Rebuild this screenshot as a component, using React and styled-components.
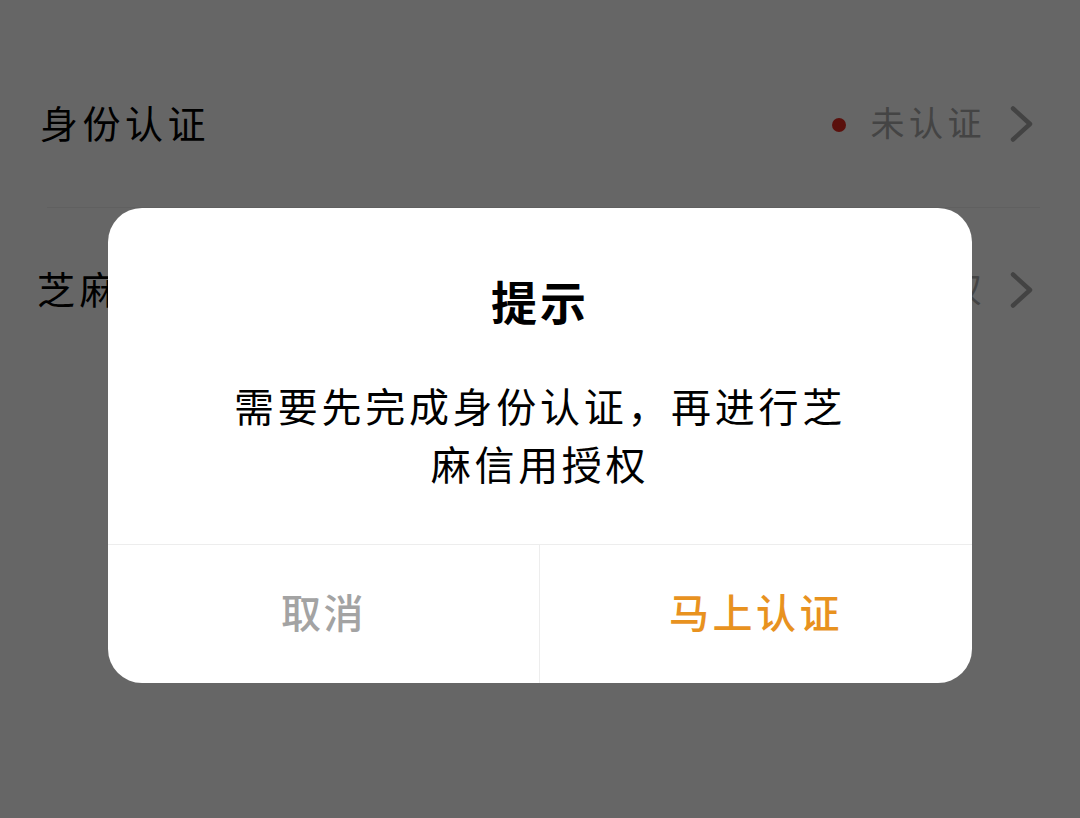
import React from "react";
import styled, { createGlobalStyle } from "styled-components";

const GlobalStyle = createGlobalStyle`
  html, body {
    margin: 0;
    padding: 0;
    background: #fff;
  }
  body {
    font-family: "Noto Sans CJK SC", "Noto Sans", sans-serif;
  }
`;

const Page = styled.div`
  position: relative;
  width: 1080px;
  height: 818px;
  overflow: hidden;
  background: #fff;
  padding-top: 41px;
  box-sizing: border-box;
`;

const Row = styled.div`
  display: flex;
  align-items: center;
  height: 166px;
  box-sizing: border-box;
  margin: 0 40px 0 ${(p) => p.$left || 40}px;
  padding-right: 6px;
`;

const Divider = styled.div`
  height: 1px;
  margin: 0 40px -1px 47px;
  background: #f0f0f0;
`;

const RowLabel = styled.span`
  flex: 1;
  font-size: 38px;
  letter-spacing: 4.5px;
  color: #000;
  line-height: 1;
  padding-bottom: 4px;
`;

const Dot = styled.i`
  width: 14px;
  height: 14px;
  border-radius: 50%;
  background: #e02a20;
  margin: 2px 25px 0 0;
`;

const RowValue = styled.span`
  font-size: 34px;
  letter-spacing: 4.5px;
  color: #aaa;
  line-height: 1;
  margin-right: 24px;
  padding-bottom: 4px;
`;

const Arrow = styled.svg`
  width: 24px;
  height: 36px;
  display: block;
`;

const Overlay = styled.div`
  position: absolute;
  inset: 0;
  background: rgba(0, 0, 0, 0.6);
  display: flex;
  justify-content: center;
  padding-top: 208px;
  box-sizing: border-box;
`;

const Dialog = styled.div`
  width: 864px;
  height: 475px;
  background: #fff;
  border-radius: 34px;
  overflow: hidden;
  display: flex;
  flex-direction: column;
`;

const Content = styled.div`
  height: 337px;
  box-sizing: border-box;
  border-bottom: 1.5px solid #ededed;
  padding-top: 62px;
  text-align: center;
`;

const Title = styled.h2`
  margin: 0 0 46px;
  font-size: 46px;
  font-weight: 700;
  letter-spacing: 3px;
  line-height: 60px;
  color: #000;
`;

const Message = styled.p`
  margin: 0 auto;
  width: 630px;
  font-size: 40px;
  letter-spacing: 3.7px;
  line-height: 58px;
  color: #000;
`;

const Actions = styled.div`
  flex: 1;
  display: grid;
  grid-template-columns: 432px 1fr;
`;

const Action = styled.button`
  border: 0;
  background: none;
  padding: 0 0 6px;
  font-family: inherit;
  font-size: 40px;
  font-weight: 500;
  letter-spacing: ${(p) => p.$spacing}px;
  color: ${(p) => p.$color};
  border-right: ${(p) => (p.$divider ? "1.5px solid #ededed" : "none")};
`;

function Chevron() {
  return (
    <Arrow viewBox="0 0 24 36" fill="none">
      <path d="M3 2.5 L20 18 L3 33.5" stroke="#a8a8a8" strokeWidth="4.5" strokeLinecap="round" strokeLinejoin="round" />
    </Arrow>
  );
}

export default function App() {
  return (
    <Page>
      <GlobalStyle />
      <Row>
        <RowLabel>身份认证</RowLabel>
        <Dot />
        <RowValue>未认证</RowValue>
        <Chevron />
      </Row>
      <Divider />
      <Row $left={37}>
        <RowLabel>芝麻信用授权</RowLabel>
        <RowValue>未授权</RowValue>
        <Chevron />
      </Row>
      <Overlay>
        <Dialog>
          <Content>
            <Title>提示</Title>
            <Message>需要先完成身份认证，再进行芝麻信用授权</Message>
          </Content>
          <Actions>
            <Action $color="#a3a3a3" $spacing={2.5} $divider>取消</Action>
            <Action $color="#e8921f" $spacing={3.5}>马上认证</Action>
          </Actions>
        </Dialog>
      </Overlay>
    </Page>
  );
}
